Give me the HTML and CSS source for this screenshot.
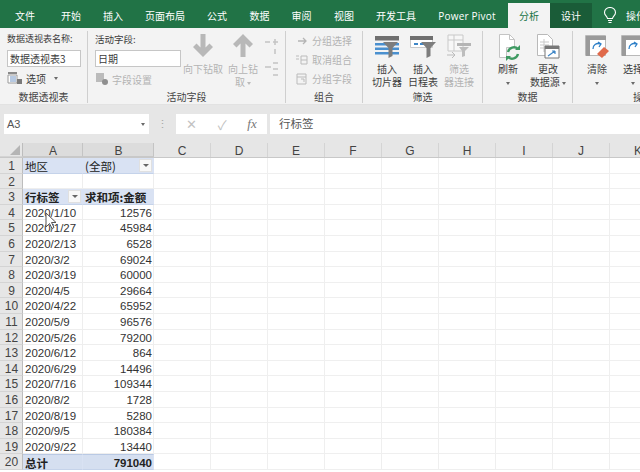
FILE: index.html
```html
<!DOCTYPE html>
<html lang="zh">
<head>
<meta charset="utf-8">
<title>Excel</title>
<link rel="stylesheet" href="styles.css">
</head>
<body>
<div class="app">
  <nav class="tabs">
    <span class="tab w50">文件</span><span class="tab w42">开始</span><span class="tab w42">插入</span><span class="tab w62">页面布局</span><span class="tab w42">公式</span><span class="tab w43">数据</span><span class="tab w41">审阅</span><span class="tab w44">视图</span><span class="tab w60">开发工具</span><span class="tab w80 latin">Power Pivot</span><span class="tab w42 active">分析</span><span class="tab w42 design">设计</span>
    <span class="bulb"><svg width="14" height="17" viewBox="0 0 14 17"><path d="M4.500 11.500C4 9 1.500 8.500 1.500 5.500a5.500 5 0 0 1 11 0C12.500 8.500 10 9 9.500 11.500zM5 13.500h4M5.500 15.500h3" fill="none" stroke="#fff" stroke-width="1.100"/></svg></span>
    <span class="tab tell">操作说明</span>
  </nav>
  <section class="ribbon">
    <div class="group g1">
      <div class="body col">
        <div class="lbl">数据透视表名称:</div>
        <div class="input">数据透视表3</div>
        <div class="small"><svg width="16" height="14" viewBox="0 0 16 14"><path d="M1 1h9v2H1z" fill="#8a8a8a"/><path d="M1 4h9v8H1z" fill="#fff" stroke="#9a9a9a"/><path d="M3 6h6M3 8h6M3 10h6" stroke="#6f93c4"/><path d="M10 8h5v5h-5z" fill="#7a7a7a"/></svg><span>选项</span><i class="caret gap"></i></div>
      </div>
      <div class="foot">数据透视表</div>
    </div>
    <div class="group g2">
      <div class="body">
        <div class="col field">
          <div class="lbl">活动字段:</div>
          <div class="input wide">日期</div>
          <div class="small off"><svg width="14" height="14" viewBox="0 0 14 14"><path d="M1 1h8v9H1z" fill="#bbb"/><circle cx="10" cy="10" r="3" fill="#8f8f8f"/></svg><span>字段设置</span></div>
        </div>
        <div class="big off b40"><svg width="22" height="30" viewBox="0 0 22 30"><path d="M11 26 1 16l3.500-3.500 4 4V3h5v13.500l4-4L21 16z" fill="#b8b8b8"/></svg><span>向下钻取</span></div>
        <div class="big off b40"><svg width="22" height="30" viewBox="0 0 22 30"><path d="M11 3 1 13l3.500 3.500 4-4V26h5V12.500l4 4L21 13z" fill="#b8b8b8"/></svg><span>向上钻<br>取 <i class="caret"></i></span></div>
        <div class="mini"><svg width="16" height="42" viewBox="0 0 16 42"><path d="M2 5h5M10 5h5M12 2v6M12 12v5M2 30h6M10 26h5M10 32h5M10 38h5" stroke="#c4c4c4" stroke-width="1.500" fill="none"/></svg></div>
      </div>
      <div class="foot">活动字段</div>
    </div>
    <div class="group g3">
      <div class="body col rows">
        <div class="small off"><svg width="14" height="12" viewBox="0 0 14 12"><path d="M3 6h8M8 3l3 3-3 3" stroke="#b5b5b5" fill="none" stroke-width="1.300"/></svg><span>分组选择</span></div>
        <div class="small off"><svg width="14" height="12" viewBox="0 0 14 12"><path d="M1 2h3M1 5h3M6 2h6v8H6zM6 6h6" stroke="#bbb" fill="none"/></svg><span>取消组合</span></div>
        <div class="small off"><svg width="14" height="12" viewBox="0 0 14 12"><path d="M2 1h9v10H2zM2 4h9M6 6h3v3" stroke="#bbb" fill="none"/></svg><span>分组字段</span></div>
      </div>
      <div class="foot">组合</div>
    </div>
    <div class="group g4">
      <div class="body">
        <div class="big b36"><svg width="24" height="30" viewBox="0 0 24 30"><path d="M0 5h24v4.500H0z" fill="#6f6f6f"/><path d="M0 12h24v2.500H0zM0 16.500h24V19H0zM0 21h24v2.500H0z" fill="#4a90cf"/><path d="M8 11h15l-5.500 6v8l-4 2v-10z" fill="#7d7d7d"/></svg><span>插入<br>切片器</span></div>
        <div class="big b36"><svg width="26" height="30" viewBox="0 0 26 30"><path d="M.5 5.500h22v11H.500z" fill="#fff" stroke="#c9c9c9"/><path d="M0 5h23v4H0z" fill="#6f6f6f"/><path d="M4 12h4v2H4zM10 12h6v2h-6z" fill="#3f86c6"/><path d="M11 11h15l-5.500 6v8l-4 2v-10z" fill="#7d7d7d"/></svg><span>插入<br>日程表</span></div>
        <div class="big off b36"><svg width="25" height="30" viewBox="0 0 25 30"><path d="M1 4h15v16H1z" fill="#f7f7f7" stroke="#c9c9c9"/><path d="M1 9h15M7 4v16" stroke="#c9c9c9"/><path d="M10 12h14v3H10z" fill="#b5b5b5"/><path d="M12 16h10l-4 4v5l-3 1v-6z" fill="#bdbdbd"/><path d="M0 24h8M5 21l3 3-3 3" stroke="#bbb" fill="none"/></svg><span>筛选<br>器连接</span></div>
      </div>
      <div class="foot">筛选</div>
    </div>
    <div class="group g5">
      <div class="body">
        <div class="big b44"><svg width="24" height="30" viewBox="0 0 24 30"><path d="M3.500 3.500h10l5 5v8h-8v10h-7z" fill="#fff" stroke="#c4c4c4"/><path d="M13.500 3.500v5h5" fill="none" stroke="#c4c4c4"/><path d="M12 21a6 6 0 0 1 10-3M22 23a6 6 0 0 1-10 3" fill="none" stroke="#3f9a62" stroke-width="2.400"/><path d="M19 19h5v-5zM15 25h-5v5z" fill="#3f9a62"/></svg><span>刷新<br><i class="caret"></i></span></div>
        <div class="big b36"><svg width="24" height="30" viewBox="0 0 24 30"><path d="M1.500 3.500h10l5 5v16h-15z" fill="#fff" stroke="#b9b9b9"/><path d="M4 11h9M4 14h9M4 17h9M8 8v13" stroke="#c9c9c9"/><path d="M9 15h14v12H9z" fill="#fff" stroke="#777"/><path d="M9 15h14v3H9z" fill="#777"/><path d="M12 25l7-5M19 20h-3M19 20v3" stroke="#3f86c6" fill="none" stroke-width="1.200"/></svg><span>更改<br><span class="nb">数据源 <i class="caret"></i></span></span></div>
      </div>
      <div class="foot">数据</div>
    </div>
    <div class="group g6">
      <div class="body">
        <div class="big b36"><svg width="24" height="30" viewBox="0 0 24 30"><path d="M.5 4.500h20v20H.5z" fill="#fff" stroke="#b9b9b9"/><path d="M1 5h20v4H1zM1 9h4v16H1z" fill="#9a9a9a"/><path d="M8 18a5 5 0 0 1 7-5M13 11l3 2-2 3" stroke="#2f80c8" fill="none" stroke-width="1.300"/><path d="M12 23l7-7 5 4-7 7z" fill="#e0694a"/></svg><span>清除<br><i class="caret"></i></span></div>
        <div class="big b36"><svg width="24" height="30" viewBox="0 0 24 30"><path d="M.5 4.500h20v20H.5z" fill="#fff" stroke="#b9b9b9"/><path d="M1 5h20v4H1zM1 9h4v16H1z" fill="#9a9a9a"/><path d="M8 18a5 5 0 0 1 7-5M13 11l3 2-2 3" stroke="#2f80c8" fill="none" stroke-width="1.300"/></svg><span>选择<br><i class="caret"></i></span></div>
      </div>
      <div class="foot">操作</div>
    </div>
  </section>
  <section class="formula">
    <div class="namebox"><span>A3</span><i class="caret dark"></i></div>
    <div class="dots">⋮</div>
    <div class="fbtns"><span>✕</span><span>✓</span><span class="fx">fx</span></div>
    <div class="fvalue">行标签</div>
  </section>
  <div class="sheet">
    <div class="row head"><div class="rh corner"></div><div class="a">A</div><div class="b">B</div><div class="ch">C</div><div class="ch">D</div><div class="ch">E</div><div class="ch">F</div><div class="ch">G</div><div class="ch">H</div><div class="ch">I</div><div class="ch">J</div><div class="ch">K</div></div>
    <div class="row"><div class="rh">1</div><div class="a cjk pv">地区</div><div class="b cjk pv filter">(全部)<i class="drop"></i></div><div class="rest"></div></div>
    <div class="row"><div class="rh">2</div><div class="a"></div><div class="b"></div><div class="rest"></div></div>
    <div class="row"><div class="rh">3</div><div class="a cjk pv bold filter">行标签<i class="drop"></i></div><div class="b cjk pv bold">求和项:金额</div><div class="rest"></div></div>
    <div class="row"><div class="rh">4</div><div class="a">2020/1/10</div><div class="b num">12576</div><div class="rest"></div></div>
    <div class="row"><div class="rh">5</div><div class="a">2020/1/27</div><div class="b num">45984</div><div class="rest"></div></div>
    <div class="row"><div class="rh">6</div><div class="a">2020/2/13</div><div class="b num">6528</div><div class="rest"></div></div>
    <div class="row"><div class="rh">7</div><div class="a">2020/3/2</div><div class="b num">69024</div><div class="rest"></div></div>
    <div class="row"><div class="rh">8</div><div class="a">2020/3/19</div><div class="b num">60000</div><div class="rest"></div></div>
    <div class="row"><div class="rh">9</div><div class="a">2020/4/5</div><div class="b num">29664</div><div class="rest"></div></div>
    <div class="row"><div class="rh">10</div><div class="a">2020/4/22</div><div class="b num">65952</div><div class="rest"></div></div>
    <div class="row"><div class="rh">11</div><div class="a">2020/5/9</div><div class="b num">96576</div><div class="rest"></div></div>
    <div class="row"><div class="rh">12</div><div class="a">2020/5/26</div><div class="b num">79200</div><div class="rest"></div></div>
    <div class="row"><div class="rh">13</div><div class="a">2020/6/12</div><div class="b num">864</div><div class="rest"></div></div>
    <div class="row"><div class="rh">14</div><div class="a">2020/6/29</div><div class="b num">14496</div><div class="rest"></div></div>
    <div class="row"><div class="rh">15</div><div class="a">2020/7/16</div><div class="b num">109344</div><div class="rest"></div></div>
    <div class="row"><div class="rh">16</div><div class="a">2020/8/2</div><div class="b num">1728</div><div class="rest"></div></div>
    <div class="row"><div class="rh">17</div><div class="a">2020/8/19</div><div class="b num">5280</div><div class="rest"></div></div>
    <div class="row"><div class="rh">18</div><div class="a">2020/9/5</div><div class="b num">180384</div><div class="rest"></div></div>
    <div class="row"><div class="rh">19</div><div class="a">2020/9/22</div><div class="b num">13440</div><div class="rest"></div></div>
    <div class="row"><div class="rh">20</div><div class="a cjk pv bold total">总计</div><div class="b num pv bold total">791040</div><div class="rest"></div></div>
    <svg class="cursor" width="13" height="18" viewBox="0 0 13 18"><path d="M1 1v14l3.500-3.500 2.500 5 2-1-2.500-5H11z" fill="#fff" stroke="#555"/></svg>
  </div>
</div>
</body>
</html>
```
FILE: styles.css
```css
* { box-sizing: border-box; }
html, body { margin: 0; padding: 0; }
body { width: 640px; height: 472px; overflow: hidden; background: #fff; font-family: "Noto Sans CJK SC", "Liberation Sans", sans-serif; color: #3c3c3c; }
.app { width: 640px; height: 472px; overflow: hidden; display: flex; flex-direction: column; }
.tabs { height: 28px; flex: none; background: #217346; display: flex; align-items: stretch; padding-top: 3px; color: #fff; font-size: 10px; white-space: nowrap; }
.tab { display: flex; align-items: center; justify-content: center; flex: none; }
.w50 { width: 50px; } .w42 { width: 42px; } .w62 { width: 62px; } .w43 { width: 43px; } .w41 { width: 41px; } .w44 { width: 44px; } .w60 { width: 60px; } .w80 { width: 82px; }
.latin { font-family: "Open Sans", "Liberation Sans", sans-serif; letter-spacing: .2px; }
.active { background: #f3f3f3; color: #217346; }
.design { background: #1a5c38; }
.bulb { width: 34px; display: flex; align-items: center; justify-content: center; flex: none; padding-left: 2px; }
.tell { justify-content: flex-start; width: 60px; }
.ribbon { height: 77px; flex: none; background: #f3f3f3; display: flex; font-size: 10px; border-bottom: 1px solid #e2e2e2; overflow: hidden; }
.group { flex: none; display: flex; flex-direction: column; border-right: 1px solid #cfcfcf; margin: 3px 0 1px; }
.body { flex: 1; display: flex; min-height: 0; }
.col { flex-direction: column; }
.foot { height: 15px; padding-top: 3px; flex: none; text-align: center; font-size: 10px; line-height: 12px; color: #444; white-space: nowrap; }
.g1 { width: 88px; } .g1 .body { padding-left: 7px; }
.g2 { width: 198px; } .g2 .body { padding-left: 7px; }
.g3 { width: 77px; } .g3 .body { padding-left: 9px; }
.g4 { width: 120px; } .g4 .body { padding-left: 6px; }
.g5 { width: 90px; } .g5 .body { padding-left: 3px; }
.g6 { width: 140px; border-right: 0; } .g6 .body { padding-left: 6px; }
.lbl { height: 16px; line-height: 16px; font-size: 9px; white-space: nowrap; }
.field .lbl { font-size: 9.500px; }
.input { width: 74px; height: 17px; margin-top: 3px; background: #fff; border: 1px solid #c6c6c6; font-size: 10px; line-height: 15px; padding-left: 2px; white-space: nowrap; overflow: hidden; }
.wide { width: 86px; }
.small { display: flex; align-items: center; gap: 3px; height: 20px; margin-top: 2px; white-space: nowrap; }
.field { width: 88px; flex: none; }
.off { color: #b4b4b4; }
.rows .small { margin-top: 0; height: 19.500px; }
.big { display: flex; flex-direction: column; align-items: center; flex: none; line-height: 13px; text-align: center; white-space: nowrap; }
.big svg { display: block; flex: none; margin-bottom: 1px; }
.nb { white-space: nowrap; }
.b36 { width: 36px; } .b40 { width: 40px; } .b44 { width: 44px; }
.mini { padding-top: 6px; width: 16px; }
.caret { display: inline-block; width: 0; height: 0; border: 2.500px solid transparent; border-top: 3px solid #6a6a6a; border-bottom: 0; vertical-align: middle; }
.gap { margin-left: 5px; }
.off .caret { border-top-color: #bbb; }
.formula { height: 40px; flex: none; background: #e6e6e6; display: flex; align-items: flex-start; padding-top: 9px; font-family: "Liberation Sans", "Noto Sans CJK SC", sans-serif; font-size: 11px; }
.namebox { width: 145px; margin-left: 4px; height: 20px; background: #fff; display: flex; align-items: center; justify-content: space-between; padding: 0 4px 0 3px; color: #555; }
.dots { width: 27px; text-align: center; color: #a5a5a5; line-height: 20px; }
.fbtns { width: 91px; height: 20px; background: #fff; display: flex; align-items: center; justify-content: space-around; color: #c2c2c2; font-size: 13px; }
.fx { font-family: "Liberation Serif", serif; font-style: italic; color: #777; font-size: 13px; }
.fvalue { flex: 1; margin-left: 3px; height: 20px; background: #fff; padding-left: 9px; line-height: 19px; font-size: 11.500px; font-family: "Noto Sans CJK SC", sans-serif; color: #555; }
.sheet { position: relative; flex: 1; min-height: 0; font-family: "Liberation Sans", "Noto Sans CJK SC", sans-serif; font-size: 11.500px; color: #333; margin-top: -2px; }
.row { display: flex; height: 15.600px; line-height: 17px; white-space: nowrap; }
.row.head { height: 15px; background: #e6e6e6; color: #444; font-size: 12px; border-bottom: 1px solid #c8c8c8; line-height: 16px; }
.rh { width: 23px; flex: none; background: #e6e6e6; border-right: 1px solid #bdbdbd; text-align: center; font-size: 12px; color: #444; border-bottom: 1px solid #d4d4d4; padding-left: 1px; }
.corner { position: relative; }
.corner::after { content: ""; position: absolute; right: 2px; bottom: 1px; border: 5px solid transparent; border-right-color: #b5b5b5; border-bottom-color: #b5b5b5; }
.head > div { text-align: center; }
.a, .b { flex: none; border-bottom: 1px solid #eeeeee; border-right: 1px solid #eeeeee; padding: 0 1px 0 2px; position: relative; overflow: visible; }
.a { width: 60px; }
.b { width: 71px; }
.ch { width: 57px; flex: none; border-right: 1px solid #d4d4d4; }
.head .a, .head .b { background: #dcdcdc; border-bottom: 1px solid #c8c8c8; border-right: 1px solid #c4c4c4; }
.num { text-align: right; }
.cjk { font-family: "Noto Sans CJK SC", "Liberation Sans", sans-serif; font-size: 11.500px; line-height: 16px; }
.pv { background: #d9e2f3; border-bottom-color: #c5d3ea; border-right-color: #d9e2f3; color: #222; }
.bold { font-weight: 700; }
.total { background: #d5dff0; border-top: 1px solid #b9c9e4; }
.filter { padding-right: 14px; }
.drop { position: absolute; right: 1px; top: 1px; width: 13px; height: 13px; background: #f8f8f8; border: 1px solid #e0e0e0; }
.drop::after { content: ""; position: absolute; left: 2.500px; top: 4px; border: 3px solid transparent; border-top: 3px solid #666; border-bottom: 0; }
.rest { flex: 1; border-bottom: 1px solid #efefef; background: repeating-linear-gradient(90deg, transparent 0 56px, #efefef 56px 57px); }
.cursor { position: absolute; left: 45px; top: 69px; }
```
